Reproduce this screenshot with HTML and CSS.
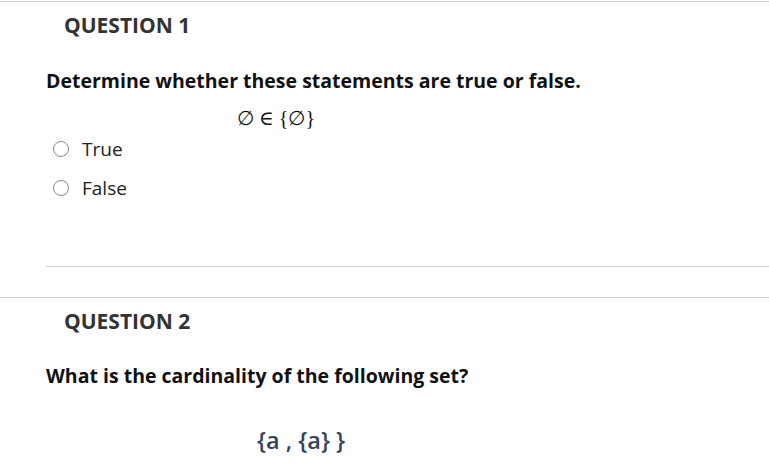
FILE: index.html
```html
<!DOCTYPE html>
<html>
<head>
<meta charset="utf-8">
<link rel="stylesheet" href="styles.css">
</head>
<body>
<div class="question q1">
  <h2 class="q-title">QUESTION 1</h2>
  <div class="q-body">
    <p class="q-text">Determine whether these statements are true or false.</p>
    <div class="math">∅ ∈ {∅}</div>
    <ul class="options">
      <li class="option"><span class="radio"></span><span class="label">True</span></li>
      <li class="option"><span class="radio"></span><span class="label">False</span></li>
    </ul>
    <div class="sep"></div>
  </div>
</div>
<div class="question q2">
  <h2 class="q-title">QUESTION 2</h2>
  <div class="q-body">
    <p class="q-text">What is the cardinality of the following set?</p>
    <div class="set">{a , {a} }</div>
  </div>
</div>
</body>
</html>
```
FILE: styles.css
```css
html, body {
  margin: 0;
  padding: 0;
  background: #fff;
}
body {
  font-family: "Open Sans", "Noto Sans", sans-serif;
  padding-top: 1px;
  overflow: hidden;
}
.question {
  border-top: 1px solid #d0d0d0;
}
.q-title {
  margin: 9px 0 0 64px;
  font-size: 21px;
  line-height: 28px;
  font-weight: 700;
  color: #333;
}
.q-body {
  padding-left: 46px;
}
.q-text {
  margin: 29px 0 0 0;
  font-size: 19.5px;
  line-height: 26px;
  font-weight: 700;
  color: #111;
}
.q2 .q-text {
  margin-top: 28px;
}
.math {
  width: 460px;
  text-align: center;
  font-family: "Liberation Serif", "DejaVu Serif", serif;
  font-size: 20px;
  line-height: 24px;
  margin-top: 12px;
  color: #111;
}
.options {
  list-style: none;
  margin: -1px 0 0 0;
  padding: 0;
}
.option {
  display: flex;
  align-items: center;
  height: 39px;
  padding-left: 7px;
}
.radio {
  width: 14px;
  height: 14px;
  border: 1px solid #8a8a8a;
  border-radius: 50%;
  box-sizing: content-box;
}
.label {
  margin-left: 13px;
  font-size: 19px;
  color: #222;
}
.sep {
  margin-top: 59px;
  border-top: 1px solid #d0d0d0;
  margin-bottom: 30px;
}
.set {
  margin: 36px 0 0 211px;
  font-size: 23.5px;
  font-weight: 600;
  color: #36455a;
  line-height: 30px;
}
```
